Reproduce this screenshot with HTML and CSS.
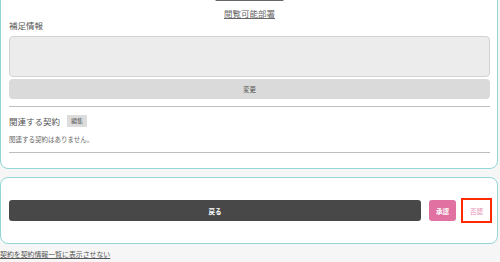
FILE: index.html
```html
<!DOCTYPE html>
<html lang="ja">
<head>
<meta charset="utf-8">
<link rel="stylesheet" href="styles.css">
</head>
<body>
<div class="page">
  <section class="card card-main">
    <div class="links">
      <a class="link" href="#">閲覧可能ユーザー</a>
      <a class="link" href="#">閲覧可能部署</a>
    </div>
    <div class="label">補足情報</div>
    <div class="textarea"></div>
    <button class="btn-change">変更</button>
    <div class="rule rule-1"></div>
    <div class="related-head">
      <span class="related-title">関連する契約</span>
      <span class="badge">編集</span>
    </div>
    <div class="empty">関連する契約はありません。</div>
    <div class="rule rule-2"></div>
  </section>
  <section class="card card-actions">
    <button class="btn btn-back">戻る</button>
    <button class="btn btn-approve">承認</button>
    <button class="btn btn-reject">否認</button>
  </section>
  <a class="hide-link" href="#">契約を契約情報一覧に表示させない</a>
</div>
</body>
</html>
```
FILE: styles.css
```css
* { box-sizing: border-box; }
html, body {
  margin: 0;
  padding: 0;
  background: #f6f6f6;
  font-family: "Noto Sans CJK JP", "Noto Sans", sans-serif;
  color: #555;
  overflow: hidden;
}
.page {
  width: 500px;
  height: 262px;
  overflow: hidden;
}
.card {
  width: 498px;
  background: #fff;
  border: 1px solid #93d6d6;
  border-radius: 8px;
}
.card-main {
  margin-top: -25px;
  padding: 13px 7px 15px 8px;
  display: flex;
  flex-direction: column;
}
.links {
  display: flex;
  flex-direction: column;
  align-items: center;
  gap: 6px;
}
.link {
  font-size: 8.5px;
  line-height: 12px;
  color: #666;
  text-decoration: underline;
}
.label {
  font-size: 8.5px;
  line-height: 12px;
  color: #555;
}
.textarea {
  margin-top: 5px;
  height: 41px;
  background: #ececec;
  border: 1px solid #d2d2d2;
  border-radius: 4px;
}
.btn-change {
  margin-top: 2px;
  height: 20px;
  border: none;
  border-radius: 4px;
  background: #dadada;
  color: #555;
  font-family: inherit;
  font-size: 6.5px;
  padding: 0;
}
.rule {
  height: 1px;
  background: #bdbdbd;
}
.rule-1 { margin-top: 7px; }
.related-head {
  margin-top: 8px;
  display: flex;
  align-items: center;
  gap: 7px;
  height: 12px;
}
.related-title {
  font-size: 8.5px;
  line-height: 12px;
  color: #555;
}
.badge {
  background: #dcdcdc;
  font-size: 6px;
  line-height: 12px;
  padding: 0 4px;
  color: #555;
}
.empty {
  margin-top: 6px;
  font-size: 6.5px;
  line-height: 12px;
  color: #666;
}
.rule-2 { margin-top: 7px; }
.card-actions {
  margin-top: 8px;
  padding: 22px 7px 22px 8px;
  display: flex;
  align-items: center;
}
.btn {
  height: 21px;
  border: none;
  padding: 0;
  font-family: inherit;
  font-size: 6.5px;
  font-weight: bold;
}
.btn-back {
  flex: 1;
  background: #484848;
  color: #fff;
  border-radius: 3px;
}
.btn-approve {
  margin-left: 8px;
  width: 27px;
  background: #e071a0;
  color: #fff;
  border-radius: 3px;
}
.btn-reject {
  margin-left: 7px;
  width: 27px;
  background: #fff;
  color: #e58ab0;
  font-weight: normal;
  outline: 2px solid #ff2a00;
}
.hide-link {
  display: block;
  margin-top: 4px;
  font-size: 6.9px;
  line-height: 12px;
  color: #555;
  text-decoration: underline;
}
```
